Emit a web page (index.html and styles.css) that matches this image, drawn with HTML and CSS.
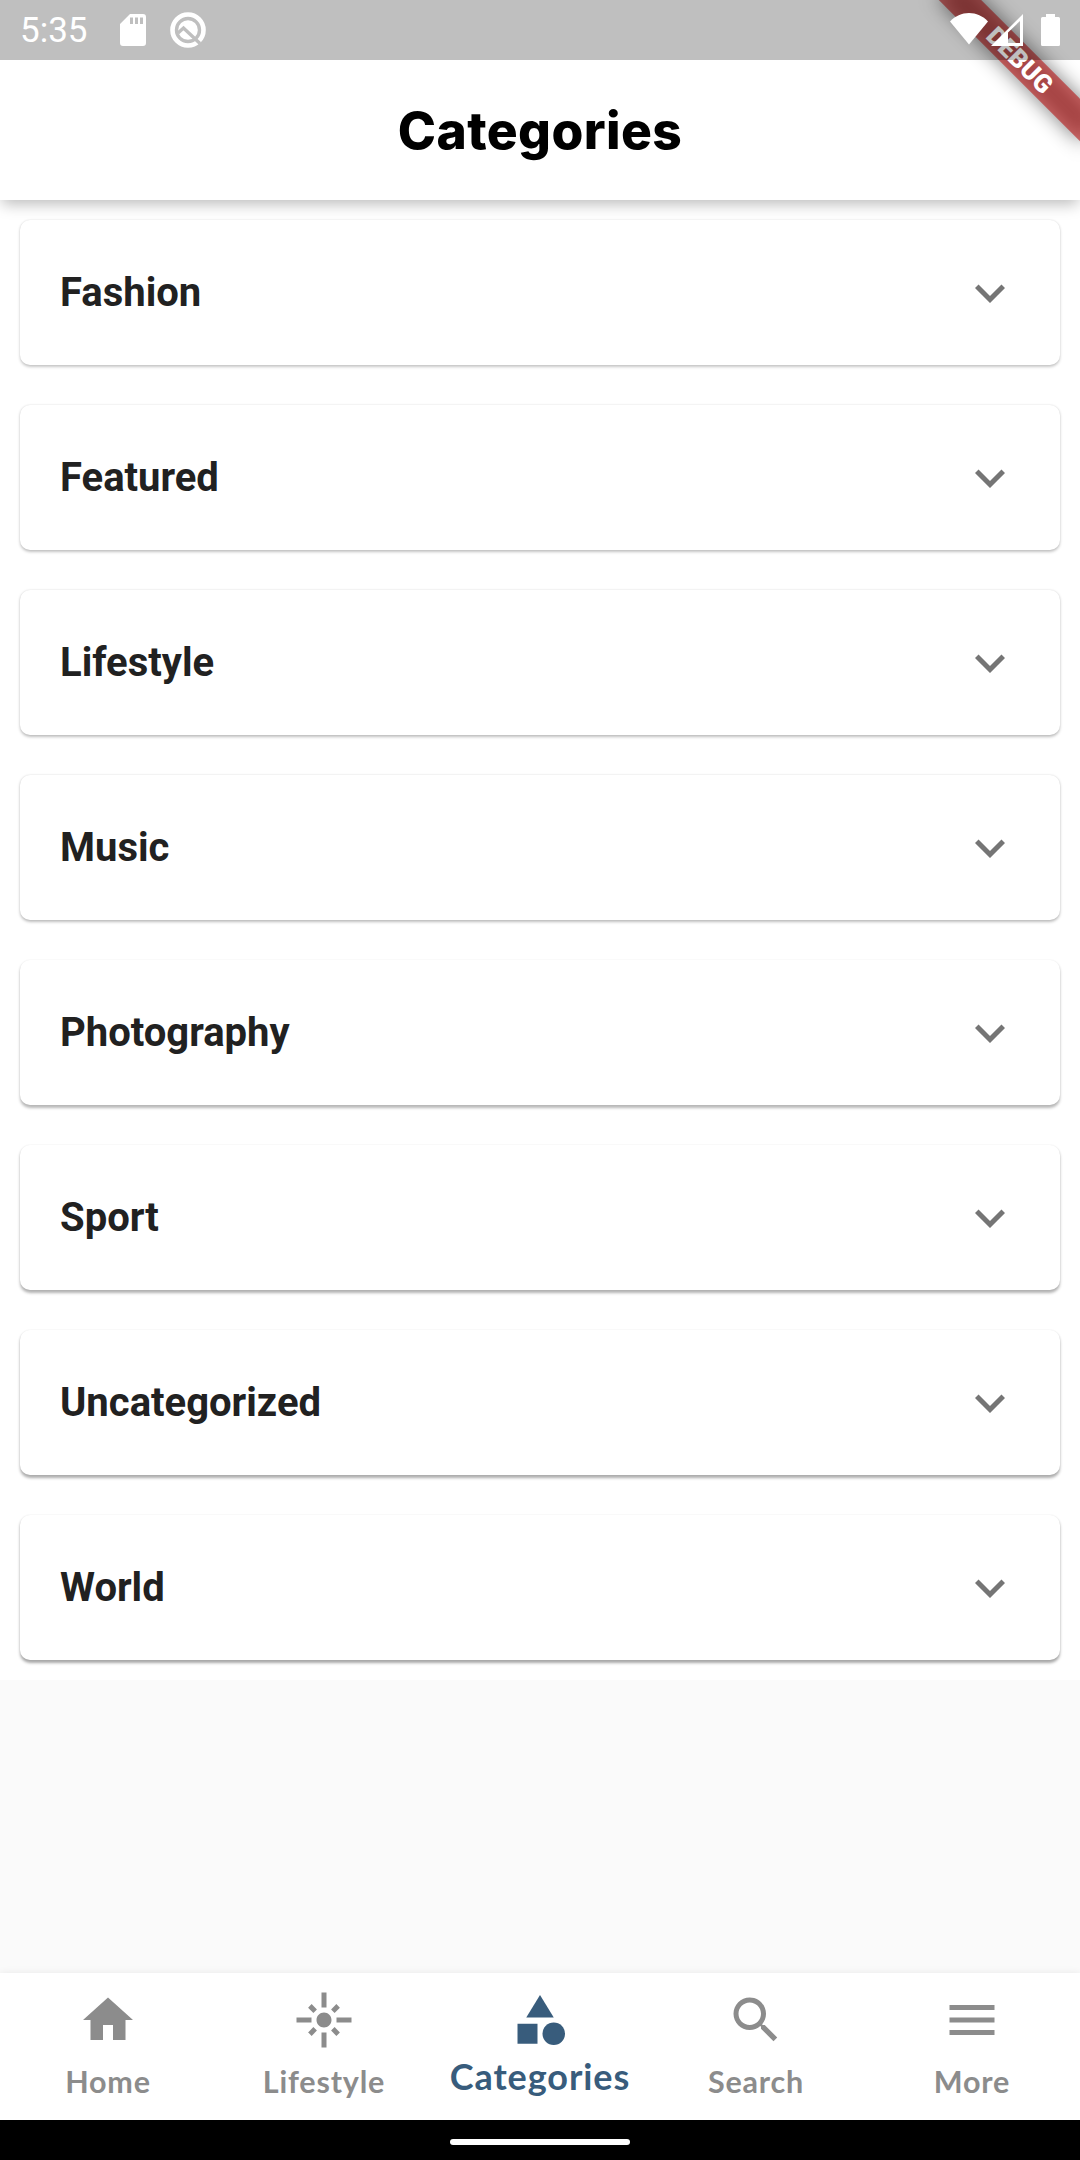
FILE: index.html
```html
<!DOCTYPE html>
<html lang="en">
<head>
<meta charset="utf-8">
<title>Categories</title>
<link rel="stylesheet" href="styles.css">
</head>
<body>
<div class="screen">
  <div class="banner-corner">
    <div class="banner-shadow"></div>
    <div class="banner">DEBUG</div>
  </div>

  <div class="status-bar">
    <span class="clock">5:35</span>
    <svg class="sd" viewBox="0 0 26 32"><path fill-rule="evenodd" d="M10 0H23Q26 0 26 3V29Q26 32 23 32H3Q0 32 0 29V10ZM10 3.500V10H13V3.500ZM15 3.500V10H18V3.500ZM20 3.500V10H23V3.500Z"/></svg>
    <svg class="q" viewBox="0 0 36 36"><circle cx="18" cy="18" r="15.500" fill="none" stroke="#fff" stroke-width="4.600"/><circle cx="18" cy="18" r="9.800"/><path d="M8 21L13.500 16L30 31.500" fill="none" stroke="#bfbfbf" stroke-width="3.400"/></svg>
    <span class="grow"></span>
    <svg class="wifi" viewBox="0 0 38 32"><path d="M19 31.500L0 8.500C5 3 12 0 19 0S33 3 38 8.500Z"/></svg>
    <svg class="signal" viewBox="0 0 32 32"><path fill-rule="evenodd" d="M0 32L32 0V32ZM17 18.500V29H29V7Z"/></svg>
    <svg class="battery" viewBox="0 0 19 32"><path d="M5 0H14V3H17.500Q19 3 19 4.500V30.500Q19 32 17.500 32H1.500Q0 32 0 30.500V4.500Q0 3 1.500 3H5Z"/></svg>
  </div>

  <header class="app-bar"><h1 class="title">Categories</h1></header>

  <main class="content">
    <div class="list">
      <div class="card c1"><span>Fashion</span><svg class="icon" viewBox="0 0 24 24"><path d="M16.590 8.590L12 13.170 7.410 8.590 6 10l6 6 6-6z"/></svg></div>
      <div class="card c2"><span>Featured</span><svg class="icon" viewBox="0 0 24 24"><path d="M16.590 8.590L12 13.170 7.410 8.590 6 10l6 6 6-6z"/></svg></div>
      <div class="card c3"><span>Lifestyle</span><svg class="icon" viewBox="0 0 24 24"><path d="M16.590 8.590L12 13.170 7.410 8.590 6 10l6 6 6-6z"/></svg></div>
      <div class="card c4"><span>Music</span><svg class="icon" viewBox="0 0 24 24"><path d="M16.590 8.590L12 13.170 7.410 8.590 6 10l6 6 6-6z"/></svg></div>
      <div class="card c5"><span>Photography</span><svg class="icon" viewBox="0 0 24 24"><path d="M16.590 8.590L12 13.170 7.410 8.590 6 10l6 6 6-6z"/></svg></div>
      <div class="card c6"><span>Sport</span><svg class="icon" viewBox="0 0 24 24"><path d="M16.590 8.590L12 13.170 7.410 8.590 6 10l6 6 6-6z"/></svg></div>
      <div class="card c7"><span>Uncategorized</span><svg class="icon" viewBox="0 0 24 24"><path d="M16.590 8.590L12 13.170 7.410 8.590 6 10l6 6 6-6z"/></svg></div>
      <div class="card c8"><span>World</span><svg class="icon" viewBox="0 0 24 24"><path d="M16.590 8.590L12 13.170 7.410 8.590 6 10l6 6 6-6z"/></svg></div>
    </div>
  </main>

  <nav class="tabs">
    <div class="tab home"><svg class="icon" viewBox="0 0 24 24"><path d="M10 20v-6h4v6h5v-8h3L12 3 2 12h3v8z"/></svg><span>Home</span></div>
    <div class="tab life"><svg class="icon" viewBox="0 0 24 24"><path d="M7 11H1v2h6v-2zm2.170-3.240L7.050 5.640 5.640 7.050l2.120 2.120 1.410-1.410zM13 1h-2v6h2V1zm5.360 6.050l-1.410-1.410-2.120 2.120 1.410 1.410 2.120-2.120zM17 11v2h6v-2h-6zm-5-2c-1.660 0-3 1.340-3 3s1.340 3 3 3 3-1.340 3-3-1.340-3-3-3zm2.830 7.240l2.120 2.120 1.410-1.410-2.120-2.120-1.410 1.410zm-9.190.710l1.410 1.410 2.120-2.120-1.410-1.410-2.120 2.120zM11 23h2v-6h-2v6z"/></svg><span>Lifestyle</span></div>
    <div class="tab active"><svg class="icon" viewBox="0 0 24 24"><path d="M12 2l-5.500 9h11z"/><circle cx="17.500" cy="17.500" r="4.500"/><path d="M3 13.500h8v8H3z"/></svg><span>Categories</span></div>
    <div class="tab search"><svg class="icon" viewBox="0 0 24 24"><path d="M15.500 14h-.790l-.280-.270C15.410 12.590 16 11.110 16 9.500 16 5.910 13.090 3 9.500 3S3 5.910 3 9.500 5.910 16 9.500 16c1.610 0 3.090-.590 4.230-1.570l.270.280v.790l5 4.990L20.490 19l-4.990-5zm-6 0C7.010 14 5 11.990 5 9.500S7.010 5 9.500 5 14 7.010 14 9.500 11.990 14 9.500 14z"/></svg><span>Search</span></div>
    <div class="tab more"><svg class="icon" viewBox="0 0 24 24"><path d="M3 18h18v-2H3v2zm0-5h18v-2H3v2zm0-7v2h18V6H3z"/></svg><span>More</span></div>
  </nav>
  <div class="gesture-bar"><div class="pill"></div></div>
</div>
</body>
</html>
```
FILE: styles.css
```css
* { box-sizing: border-box; }
body { margin: 0; font-family: Roboto, "Liberation Sans", sans-serif; }
.screen {
  position: relative;
  width: 1080px;
  height: 2160px;
  display: flex;
  flex-direction: column;
  overflow: hidden;
  background: #fafafa;
}
svg { display: block; flex: none; }

.status-bar {
  position: relative;
  z-index: 4;
  flex: none;
  height: 60px;
  display: flex;
  align-items: center;
  padding: 0 20px;
  background: rgba(0, 0, 0, .25);
  color: #fff;
  fill: #fff;
}
.clock { width: 100px; font-size: 35px; line-height: 60px; padding-top: 2px; }
.grow { flex: 1; }
.sd { width: 26px; height: 32px; }
.q { width: 36px; height: 36px; margin-left: 24px; }
.wifi { width: 38px; height: 32px; margin-top: -2px; }
.signal { width: 32px; height: 32px; margin-left: 3px; margin-top: -1px; }
.battery { width: 19px; height: 32px; margin-left: 18px; margin-top: -1px; }

.app-bar {
  position: relative;
  z-index: 2;
  flex: none;
  height: 200px;
  margin-top: -60px;
  padding-top: 60px;
  display: flex;
  align-items: center;
  justify-content: center;
  background: #fff;
  box-shadow: 0 6px 14px -2px rgba(0, 0, 0, .27);
}
.title { margin: 0; font: 800 51.5px/70px Inter, sans-serif; letter-spacing: .4px; color: #000; }

/* Corner ribbon: lies over the app bar, under the translucent status bar */
.banner-corner {
  position: absolute;
  z-index: 3;
  top: 0;
  right: 0;
  width: 260px;
  height: 260px;
  overflow: hidden;
}
.banner, .banner-shadow {
  position: absolute;
  left: 100px;
  top: 45px;
  width: 200px;
  height: 30px;
  transform: rotate(45deg);
}
.banner-shadow { background: rgba(0, 0, 0, .5); filter: blur(9.9px); }
.banner {
  background: rgba(183, 28, 28, .63);
  color: #fff;
  font-size: 25.5px;
  font-weight: 900;
  line-height: 30px;
  text-align: center;
}

.content { flex: 1; }
.list {
  display: flex;
  flex-direction: column;
  gap: 40px;
  padding: 20px;
  background: #fff;
}
.card {
  height: 145px;
  display: flex;
  align-items: center;
  justify-content: space-between;
  padding: 0 40px;
  border-radius: 10px;
  background: #fff;
  color: #212121;
  font-size: 40px;
  font-weight: 700;
  box-shadow: 0 var(--drop) 3px rgba(0, 0, 0, var(--shade)), 0 0 2px rgba(0, 0, 0, .06);
}
.c1 { --drop: 1.2px; --shade: .22; }
.c2 { --drop: 1.4px; --shade: .24; }
.c3 { --drop: 1.6px; --shade: .25; }
.c4 { --drop: 1.9px; --shade: .26; }
.c5 { --drop: 2.1px; --shade: .28; }
.c6 { --drop: 2.3px; --shade: .30; }
.c7 { --drop: 2.6px; --shade: .32; }
.c8 { --drop: 2.9px; --shade: .34; }
.icon { width: 60px; height: 60px; }
.card .icon { fill: #757575; }

.tabs {
  position: relative;
  flex: none;
  height: 147px;
  display: grid;
  grid-template-columns: repeat(5, 1fr);
  background: #fff;
  box-shadow: 0 0 8px rgba(0, 0, 0, .07);
}
.tab {
  display: flex;
  flex-direction: column;
  align-items: center;
  padding-top: 17px;
  color: #8c8c8c;
  fill: #8c8c8c;
  font: 700 30.5px/40px Lato, sans-serif;
  letter-spacing: .8px;
}
.tab span { margin-top: 11px; }
.active { color: #385c7c; fill: #385c7c; font-size: 36px; letter-spacing: .9px; }
.active span { margin-top: 6px; }

.gesture-bar {
  position: relative;
  flex: none;
  height: 40px;
  display: flex;
  justify-content: center;
  align-items: center;
  padding-top: 4px;
  background: #000;
}
.pill { width: 180px; height: 6px; border-radius: 3px; background: #fff; }
```
